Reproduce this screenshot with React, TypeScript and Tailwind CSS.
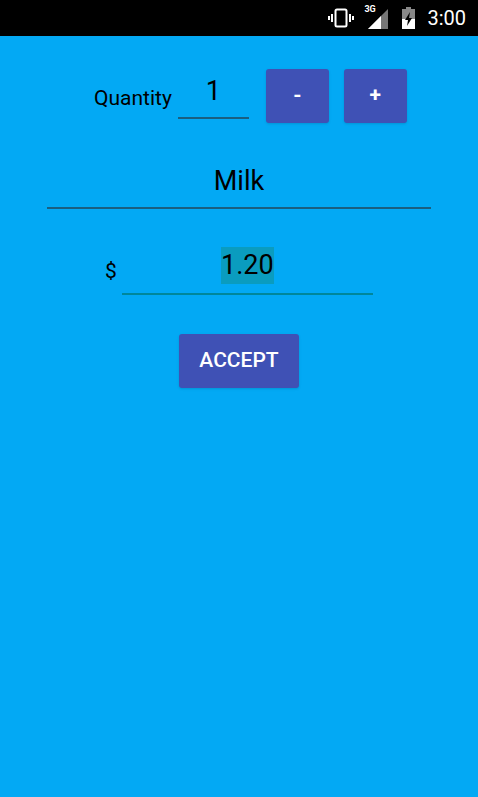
const StatusBar = () => (
  <div className="flex h-[36px] items-center justify-end bg-black pr-[12px] text-white">
    {/* vibrate */}
    <svg width="26" height="20" viewBox="0 0 26 20" className="mr-[10px]">
      <rect x="7.5" y="1.5" width="11" height="17" rx="1.5" fill="none" stroke="white" strokeWidth="2" />
      <rect x="3" y="6" width="2" height="8" fill="white" />
      <rect x="0" y="8" width="2" height="4" fill="white" />
      <rect x="21" y="6" width="2" height="8" fill="white" />
      <rect x="24" y="8" width="2" height="4" fill="white" />
    </svg>
    {/* 3G signal */}
    <div className="relative mr-[14px] h-[22px] w-[24px]">
      <span className="absolute left-0 top-[-2px] text-[9px] font-bold leading-none" style={{ fontFamily: "Roboto, sans-serif" }}>
        3G
      </span>
      <svg width="24" height="22" viewBox="0 0 24 22" className="absolute left-0 top-0">
        <polygon points="24,2 24,22 4,22" fill="#777" />
        <polygon points="17,9 17,22 4,22" fill="white" />
      </svg>
    </div>
    {/* battery */}
    <svg width="13" height="22" viewBox="0 0 13 22" className="mr-[12px]">
      <rect x="4" y="0" width="5" height="2" fill="#888" />
      <rect x="0" y="2" width="13" height="20" fill="#888" />
      <rect x="0" y="12" width="13" height="10" fill="white" />
      <polygon points="8,5 3,13 6,13 5,19 10,11 7,11" fill="black" />
    </svg>
    <span className="text-[20px] leading-none" style={{ fontFamily: "Roboto, sans-serif" }}>
      3:00
    </span>
  </div>
);

export default function App() {
  return (
    <div className="h-[797px] w-[478px] overflow-hidden bg-[#03A9F4] font-['Roboto',sans-serif] text-black">
      <StatusBar />

      {/* quantity row */}
      <div className="flex items-start pl-[94px]">
        <span className="mt-[50px] text-[21px] leading-[24px]">Quantity</span>
        <div className="ml-[6px] mt-[39px] flex h-[44px] w-[71px] justify-center border-b-2 border-[#1a5f80]">
          <span className="text-[27px] leading-[32px]">1</span>
        </div>
        <button className="ml-[17px] mt-[33px] h-[54px] w-[63px] rounded-[3px] bg-[#3F51B5] text-[21px] font-bold text-white shadow-sm">
          -
        </button>
        <button className="ml-[15px] mt-[33px] h-[54px] w-[63px] rounded-[3px] bg-[#3F51B5] text-[21px] font-bold text-white shadow-sm">
          +
        </button>
      </div>

      {/* name */}
      <div className="mx-[47px] mt-[42px] flex h-[44px] justify-center border-b-2 border-[#1a5f80]">
        <span className="text-[27px] leading-[32px]">Milk</span>
      </div>

      {/* price */}
      <div className="mt-[38px] flex items-end pl-[105px]">
        <span className="mb-[12px] text-[21px] leading-[24px]">$</span>
        <div className="ml-[5px] flex h-[48px] w-[251px] justify-center border-b-2 border-[#00879b]">
          <span className="h-[37px] bg-[#0a9cbf] text-[27px] leading-[37px]">1.20</span>
        </div>
      </div>

      {/* accept */}
      <div className="mt-[39px] flex justify-center">
        <button className="h-[54px] w-[120px] rounded-[3px] bg-[#3F51B5] text-[21px] font-medium text-white shadow-sm">
          ACCEPT
        </button>
      </div>
    </div>
  );
}
